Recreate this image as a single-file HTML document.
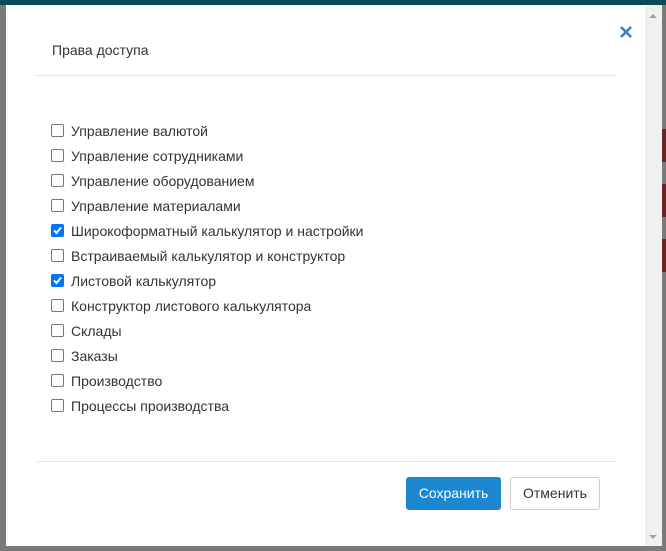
<!DOCTYPE html>
<html><head><meta charset="utf-8"><style>
*{box-sizing:border-box;margin:0;padding:0}
body{width:666px;height:551px;overflow:hidden;background:#7a7a7a;font-family:"Liberation Sans",sans-serif;position:relative}
.top{position:absolute;left:0;top:0;width:666px;height:5px;background:#0d4a57}
.modal{position:absolute;left:6px;top:5px;width:639px;height:541px;background:#fff}
.sb{position:absolute;left:645px;top:5px;width:17px;height:541px;background:#f0f0f0}
.sb:before{content:"";position:absolute;left:4px;top:9px;border:4px solid transparent;border-bottom:4px solid #a3a3a3;border-top:0}
.sb:after{content:"";position:absolute;left:4px;bottom:7px;border:4px solid transparent;border-top:4px solid #a3a3a3;border-bottom:0}
.red{position:absolute;left:662px;width:4px;height:33px;background:#6b2424}
.title{position:absolute;left:46px;top:37px;font-size:14px;color:#333}
.hr{position:absolute;left:30px;width:579px;height:1px;background:#e5e5e5}
.x{position:absolute;left:613px;top:20px}
.row{position:absolute;left:45px;font-size:14px;color:#333;height:20px;line-height:20px}
.cb{position:absolute;left:0;top:3px;width:13px;height:13px;border:1px solid #767676;border-radius:2px;background:#fff}
.cb.on{background:#0075ff;border-color:#0075ff}
.row span{position:absolute;left:20px;white-space:nowrap}
.btn{position:absolute;top:472px;height:33px;border-radius:3px;font-size:14px;line-height:31px;text-align:center}
.save{left:400px;width:95px;background:#1a87d0;color:#fff;border:1px solid #1a87d0}
.cancel{left:504px;width:90px;background:#fff;color:#333;border:1px solid #ccc}
</style></head><body>
<div class="top"></div>
<div class="red" style="top:129px"></div>
<div class="red" style="top:184px"></div>
<div class="red" style="top:239px"></div>
<div class="sb"></div>
<div class="modal">
<div class="title">Права доступа</div>
<svg class="x" width="14" height="14" viewBox="0 0 14 14"><path d="M2 2L12 12M12 2L2 12" stroke="#3a7fc1" stroke-width="2.6"/></svg>
<div class="hr" style="top:70px"></div>
<div class="row" style="top:116px"><div class="cb"></div><span>Управление валютой</span></div>
<div class="row" style="top:141px"><div class="cb"></div><span>Управление сотрудниками</span></div>
<div class="row" style="top:166px"><div class="cb"></div><span>Управление оборудованием</span></div>
<div class="row" style="top:191px"><div class="cb"></div><span>Управление материалами</span></div>
<div class="row" style="top:216px"><div class="cb on"><svg width="11" height="11" viewBox="0 0 11 11" style="position:absolute;left:0;top:0"><path d="M2 5.5L4.5 8L9 2.5" stroke="#fff" stroke-width="2" fill="none"/></svg></div><span>Широкоформатный калькулятор и настройки</span></div>
<div class="row" style="top:241px"><div class="cb"></div><span>Встраиваемый калькулятор и конструктор</span></div>
<div class="row" style="top:266px"><div class="cb on"><svg width="11" height="11" viewBox="0 0 11 11" style="position:absolute;left:0;top:0"><path d="M2 5.5L4.5 8L9 2.5" stroke="#fff" stroke-width="2" fill="none"/></svg></div><span>Листовой калькулятор</span></div>
<div class="row" style="top:291px"><div class="cb"></div><span>Конструктор листового калькулятора</span></div>
<div class="row" style="top:316px"><div class="cb"></div><span>Склады</span></div>
<div class="row" style="top:341px"><div class="cb"></div><span>Заказы</span></div>
<div class="row" style="top:366px"><div class="cb"></div><span>Производство</span></div>
<div class="row" style="top:391px"><div class="cb"></div><span>Процессы производства</span></div>
<div class="hr" style="top:456px"></div>
<div class="btn save">Сохранить</div>
<div class="btn cancel">Отменить</div>
</div>
</body></html>
